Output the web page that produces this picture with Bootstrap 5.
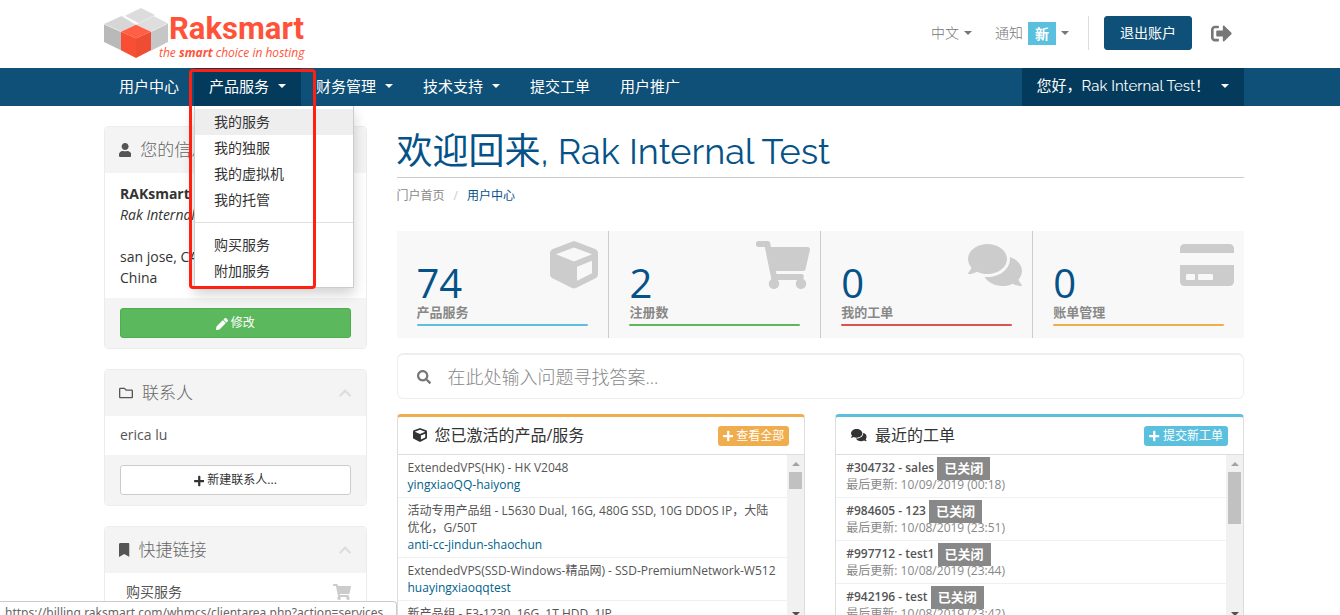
<!DOCTYPE html>
<html lang="zh-CN">
<head>
<meta charset="utf-8">
<meta name="viewport" content="width=device-width, initial-scale=1">
<title>用户中心 - Raksmart</title>
<link href="https://cdn.jsdelivr.net/npm/bootstrap@5.3.0/dist/css/bootstrap.min.css" rel="stylesheet">
<style>
  body { font-family: "Open Sans", "Noto Sans CJK SC", sans-serif; font-size: 14px; line-height: 20px; color: #333; height: 100vh; overflow: hidden; }
  a { text-decoration: none; }
  .site-wrap { max-width: 1148px; padding: 0 0 0 8px; }
  .ico { height: 1em; width: auto; fill: currentColor; flex: none; }
  .caret { display: inline-block; border: 4px solid transparent; border-top-color: currentColor; border-bottom: 0; flex: none; }

  .top-bar { height: 66px; margin-bottom: 2px; }
  .brand-text { margin-left: -9px; padding-top: 5px; }
  .brand-name { color: #ff5339; font: bold 31px/34px Roboto, "Liberation Sans", sans-serif; padding-left: 10px; }
  .brand-tag { color: #ff5339; font-size: 12px; font-style: italic; line-height: 14px; }
  .top-tools { padding-right: 12px; gap: 19px; }
  .top-link { color: #777; gap: 5px; font-weight: 300; }
  .new-tag { background: #5bc0de; color: #fff; font-weight: 700; padding: 0 7px; line-height: 23px; }
  .top-sep { width: 1px; height: 34px; background: #ddd; }
  .btn-logout { --bs-btn-color: #fff; --bs-btn-bg: #0f5078; --bs-btn-border-color: #0f5078; --bs-btn-hover-color: #fff; --bs-btn-hover-bg: #043b5c; font-size: 14px; line-height: 20px; padding: 6px 15px; border-radius: 3px; margin-left: -4px; }
  .exit-ico { font-size: 21px; color: #777; }

  .main-menu { background: #0f5078; }
  .main-menu a.menu-link { color: #fff; font-size: 15px; line-height: 20px; padding: 8px 15px 10px; display: flex; align-items: center; gap: 9px; }
  .main-menu a.current { background: #043b5c; }
  .main-menu a.account { font-family: Raleway, "Noto Sans CJK SC", sans-serif; gap: 11px; }
  .sub-menu { display: block; top: 100%; left: 0; width: 160px; min-width: 0; padding: 3px 0; font-size: 14px; border: 1px solid #ccc; border-top: 0; border-radius: 0; box-shadow: 0 6px 12px rgba(0,0,0,.18); }
  .sub-menu .dropdown-item { padding: 3px 19px; line-height: 20px; color: #333; }
  .sub-menu .dropdown-item.hovered { background: #eee; }
  .sub-menu .dropdown-divider { margin: 9px 0; border-color: #e0e0e0; opacity: 1; }
  .red-frame { position: absolute; z-index: 1100; top: 1px; left: -5px; width: 127px; height: 220px; border: 3px solid #ff2012; border-radius: 4px; pointer-events: none; }

  .page-row { --bs-gutter-x: 30px; }
  .side-box { border: 1px solid #ececec; border-radius: 4px; margin-bottom: 20px; overflow: hidden; }
  .side-head { background: #f4f4f4; font-size: 17px; line-height: 26px; padding: 10px 14px; color: #666; font-weight: 300; gap: 9px; }
  .side-head .ico { font-size: 14px; color: #555; }
  .side-head .chev { color: #ddd; margin-left: auto; }
  .side-foot { background: #f4f4f4; padding: 10px 15px; }
  .side-foot .btn { font-size: 12px; line-height: 18px; padding: 5px 10px; border-radius: 3px; }
  .btn-edit { background: #5cb85c; border-color: #4cae4c; color: #fff; }
  .btn-add { background: #fff; border-color: #ccc; color: #333; }
  .side-info { padding: 10px 15px; line-height: 21px; }
  .side-item { padding: 9px 15px 10px; color: #555; }
  .quick { padding-left: 21px; }
  .quick .ico { font-size: 16px; color: #ccc; }

  .welcome { font: 400 36px/52px Raleway, "Noto Sans CJK SC", sans-serif; color: #045288; border-bottom: 1px solid #ccc; margin: 0; padding-top: 3px; }
  .crumbs { --bs-breadcrumb-divider-color: #ccc; --bs-breadcrumb-item-padding-x: 9px; font-size: 12px; line-height: 18px; padding: 9px 0; margin: 0 0 17px; }
  .crumbs a { color: #888; }
  .crumbs .active { color: #045288; }
  .tile { background: #f8f8f8; height: 107px; padding: 31px 20px 0; color: #888; position: relative; display: block; }
  .tile-cell + .tile-cell .tile { border-left: 1px solid #ccc; }
  .tile .ico { position: absolute; top: 10px; right: 10px; font-size: 48px; color: #ccc; }
  .tile-num { font-size: 40px; line-height: 42px; color: #045288; }
  .tile-name { font-size: 13px; line-height: 17px; font-weight: 700; }
  .tile-bar { height: 2px; margin-top: 3px; border-radius: 1px; }
  .c-teal { background: #5bc0de; } .c-green { background: #5cb85c; } .c-red { background: #d9534f; } .c-gold { background: #f0ad4e; }

  .ask { border: 1px solid #eee; border-top-width: 2px; border-radius: 6px; margin: 15px 0; padding: 0 19px; gap: 17px; color: #777; }
  .ask .ico { font-size: 14px; }
  .ask input { border: 0; padding: 7px 0 6px; font-size: 18px; line-height: 30px; font-weight: 300; background: none; box-shadow: none !important; }
  .ask input::placeholder { color: #888; }

  .feed { border: 1px solid #ddd; border-top: 3px solid; border-radius: 4px; }
  .feed-gold { border-top-color: #f0ad4e; } .feed-teal { border-top-color: #5bc0de; }
  .feed-head { border-bottom: 1px solid #ddd; padding: 6px 15px 7px; font-size: 16px; line-height: 24px; gap: 8px; }
  .feed-head .head-ico { font-size: 14px; }
  .feed-head .btn { margin: 2px 0 0 auto; color: #fff; font-size: 12px; line-height: 18px; padding: 1px 5px; border: 0; border-radius: 3px; gap: 3px; }
  .feed-body { height: 163px; overflow: hidden; }
  .feed-list { font-size: 12px; line-height: 17px; color: #555; min-width: 0; }
  .feed-list > a { display: block; padding: 4px 10px; border-bottom: 1px solid #f0f0f0; color: #555; }
  .feed-list .host { color: #005f8b; }
  .feed-list .when { color: #888; }
  .feed-list .subject { font-weight: 600; }
  .closed { position: relative; z-index: 1; display: inline-block; background: #888; color: #fff; font-size: 13px; font-weight: 700; line-height: 23px; padding: 0 7px; margin: -2px 0 -4px; vertical-align: top; }
  .scroll-rail { width: 17px; background: #f1f1f1; flex: none; padding: 7px 0 2px; color: #505050; }
  .rail-up { border: 4px solid transparent; border-top: 0; border-bottom-color: #a3a3a3; }
  .rail-thumb { width: 13px; height: 17px; background: #c1c1c1; margin: 6px 0 auto; }
  .rail-thumb.tall { height: 52px; }

  .status-line { height: 14px; overflow: hidden; background: #fff; border: 1px solid #ccc; border-bottom: 0; border-left: 0; border-top-right-radius: 4px; padding: 0 13px 0 5px; font: 12px/22px "Noto Sans", sans-serif; color: #666; z-index: 1200; }
</style>
</head>
<body>
<svg class="d-none" xmlns="http://www.w3.org/2000/svg">
  <symbol id="i-exit" viewBox="0 0 512 512"><path d="M497 273L329 441c-15 15-41 4.500-41-17v-96H152c-13.300 0-24-10.700-24-24v-96c0-13.300 10.700-24 24-24h136V88c0-21.400 25.900-32 41-17l168 168c9.300 9.400 9.300 24.600 0 34zM192 436v-40c0-6.600-5.400-12-12-12H96c-17.700 0-32-14.300-32-32V160c0-17.700 14.300-32 32-32h84c6.600 0 12-5.400 12-12V76c0-6.600-5.400-12-12-12H96c-53 0-96 43-96 96v192c0 53 43 96 96 96h84c6.600 0 12-5.400 12-12z"/></symbol>
  <symbol id="i-cube" viewBox="0 0 512 512"><path d="M239.100 6.300l-208 78c-18.700 7-31.100 25-31.100 45v225.100c0 18.200 10.300 34.800 26.500 42.900l208 104c13.500 6.800 29.400 6.800 42.900 0l208-104c16.300-8.100 26.500-24.800 26.500-42.900V129.300c0-20-12.400-37.900-31.100-44.900l-208-78C262 2.200 250 2.200 239.100 6.300zM256 68.400l192 72v1.100l-192 78-192-78v-1.100l192-72zm32 356V275.500l160-65v133.900l-160 80z"/></symbol>
  <symbol id="i-cart" viewBox="0 0 576 512"><path d="M528.120 301.319l47.273-208C578.806 78.301 567.391 64 551.990 64H159.208l-9.166-44.810C147.758 8.021 137.930 0 126.529 0H24C10.745 0 0 10.745 0 24v16c0 13.255 10.745 24 24 24h69.883l70.248 343.435C147.325 417.100 136 435.222 136 456c0 30.928 25.072 56 56 56s56-25.072 56-56c0-15.674-6.447-29.835-16.824-40h209.647C430.447 426.165 424 440.326 424 456c0 30.928 25.072 56 56 56s56-25.072 56-56c0-22.172-12.888-41.332-31.579-50.405l5.517-24.276c3.413-15.018-8.002-29.319-23.403-29.319H218.117l-6.545-32h293.145c11.206 0 20.920-7.754 23.403-18.681z"/></symbol>
  <symbol id="i-talk" viewBox="0 0 576 512"><path d="M416 192c0-88.400-93.100-160-208-160S0 103.600 0 192c0 34.300 14.100 65.900 38 92-13.400 30.200-35.500 54.200-35.800 54.500-2.200 2.300-2.800 5.700-1.500 8.700S4.800 352 8 352c36.600 0 66.900-12.300 88.700-25 32.200 15.700 70.300 25 111.300 25 114.900 0 208-71.600 208-160zm122 220c23.900-26 38-57.700 38-92 0-66.900-53.500-124.200-129.300-148.100.9 6.600 1.300 13.300 1.300 20.100 0 105.900-107.700 192-240 192-10.800 0-21.300-.8-31.700-1.900C207.800 439.600 281.800 480 368 480c41 0 79.100-9.200 111.300-25 21.800 12.700 52.100 25 88.700 25 3.200 0 6.100-1.900 7.300-4.800 1.300-2.900.7-6.300-1.500-8.700-.3-.3-22.400-24.200-35.800-54.500z"/></symbol>
  <symbol id="i-card" viewBox="0 0 576 512"><path d="M0 432c0 26.500 21.500 48 48 48h480c26.500 0 48-21.500 48-48V256H0v176zm192-68c0-6.600 5.400-12 12-12h136c6.600 0 12 5.400 12 12v40c0 6.600-5.400 12-12 12H204c-6.600 0-12-5.400-12-12v-40zm-128 0c0-6.600 5.400-12 12-12h72c6.600 0 12 5.400 12 12v40c0 6.600-5.400 12-12 12H76c-6.600 0-12-5.400-12-12v-40zM576 80v48H0V80c0-26.500 21.500-48 48-48h480c26.500 0 48 21.500 48 48z"/></symbol>
  <symbol id="i-user" viewBox="0 0 448 512"><path d="M224 256c70.700 0 128-57.300 128-128S294.700 0 224 0 96 57.300 96 128s57.300 128 128 128zm89.600 32h-16.700c-22.200 10.200-46.900 16-72.900 16s-50.600-5.800-72.900-16h-16.700C60.200 288 0 348.200 0 422.400V464c0 26.500 21.500 48 48 48h352c26.500 0 48-21.500 48-48v-41.600c0-74.200-60.200-134.400-134.400-134.400z"/></symbol>
  <symbol id="i-folder" viewBox="0 0 512 512"><path d="M464 128H272l-54.630-54.630c-6-6-14.140-9.370-22.630-9.370H48C21.490 64 0 85.490 0 112v288c0 26.510 21.490 48 48 48h416c26.510 0 48-21.490 48-48V176c0-26.510-21.490-48-48-48zm0 272H48V112h140.120l54.630 54.630c6 6 14.140 9.370 22.630 9.370H464v224z"/></symbol>
  <symbol id="i-mark" viewBox="0 0 384 512"><path d="M0 512V48C0 21.490 21.490 0 48 0h288c26.510 0 48 21.490 48 48v464L192 400 0 512z"/></symbol>
  <symbol id="i-up" viewBox="0 0 448 512"><path d="M240.971 130.524l194.343 194.343c9.373 9.373 9.373 24.569 0 33.941l-22.667 22.667c-9.357 9.357-24.522 9.375-33.901.04L224 227.495 69.255 381.516c-9.379 9.335-24.544 9.317-33.901-.04l-22.667-22.667c-9.373-9.373-9.373-24.569 0-33.941L207.030 130.525c9.372-9.373 24.568-9.373 33.941-.001z"/></symbol>
  <symbol id="i-pen" viewBox="0 0 512 512"><path d="M497.900 142.100l-46.100 46.100c-4.700 4.700-12.300 4.700-17 0l-111-111c-4.700-4.700-4.700-12.300 0-17l46.100-46.100c18.700-18.700 49.100-18.700 67.900 0l60.100 60.100c18.800 18.700 18.800 49.100 0 67.900zM284.200 99.800L21.600 362.400.4 483.900c-2.900 16.400 11.400 30.600 27.800 27.800l121.500-21.300 262.600-262.600c4.700-4.700 4.700-12.300 0-17l-111-111c-4.800-4.700-12.400-4.700-17.100 0z"/></symbol>
  <symbol id="i-plus" viewBox="0 0 448 512"><path d="M416 208H272V64c0-17.670-14.330-32-32-32h-32c-17.670 0-32 14.330-32 32v144H32c-17.670 0-32 14.330-32 32v32c0 17.670 14.330 32 32 32h144v144c0 17.670 14.330 32 32 32h32c17.670 0 32-14.330 32-32V304h144c17.670 0 32-14.330 32-32v-32c0-17.670-14.330-32-32-32z"/></symbol>
  <symbol id="i-find" viewBox="0 0 512 512"><path d="M505 442.700L405.300 343c-4.500-4.500-10.600-7-17-7H372c27.600-35.300 44-79.700 44-128C416 93.100 322.900 0 208 0S0 93.100 0 208s93.100 208 208 208c48.300 0 92.700-16.400 128-44v16.300c0 6.400 2.500 12.500 7 17l99.700 99.700c9.400 9.400 24.600 9.400 33.900 0l28.300-28.300c9.400-9.400 9.400-24.600.1-34zM208 336c-70.700 0-128-57.200-128-128 0-70.700 57.200-128 128-128 70.700 0 128 57.200 128 128 0 70.700-57.200 128-128 128z"/></symbol>
</svg>

<header>
  <div class="container site-wrap top-bar d-flex align-items-center justify-content-between">
    <a href="#" class="d-flex align-items-center" aria-label="Raksmart">
      <svg width="64" height="50" viewBox="42 24 192 150" aria-hidden="true">
        <path fill="#dcdcdc" d="M153 24l42 21-45 27-45-25z"/>
        <path fill="#d6d6d6" d="M42 72l53-24 43 26-45 21z"/>
        <path fill="#b9b9b9" d="M42 72l51 23v56l-51-25z"/>
        <path fill="#dedede" d="M190 48l44 22-51 25-45-21z"/>
        <path fill="#c6c6c6" d="M183 95l51-25v56l-51 26z"/>
        <path fill="none" stroke="#f2f2f2" stroke-width="2" d="M95 48l43 26 52-26M42 72l51 23M234 70l-51 25"/>
        <path fill="#ff5f44" d="M138 74l45 21-45 20-45-20z"/>
        <path fill="#f84e34" d="M93 95l45 20v59l-45-23z"/>
        <path fill="#ee4d33" d="M138 115l45-20v56l-45 23z"/>
      </svg>
      <span class="brand-text d-flex flex-column"><span class="brand-name">Raksmart</span><span class="brand-tag">the <b>smart</b> choice in hosting</span></span>
    </a>
    <div class="top-tools d-flex align-items-center">
      <a href="#" class="top-link d-flex align-items-center me-1">中文<span class="caret"></span></a>
      <a href="#" class="top-link d-flex align-items-center">通知<span class="new-tag">新</span><span class="caret"></span></a>
      <span class="top-sep"></span>
      <button type="button" class="btn btn-logout">退出账户</button>
      <a href="#" class="exit-ico d-flex" aria-label="退出"><svg class="ico" viewBox="0 0 512 512"><use href="#i-exit"/></svg></a>
    </div>
  </div>
  <nav class="main-menu">
    <div class="container site-wrap d-flex">
      <a href="#" class="menu-link">用户中心</a>
      <div class="position-relative">
        <a href="#" class="menu-link current">产品服务<span class="caret"></span></a>
        <div class="dropdown-menu sub-menu">
          <a class="dropdown-item hovered" href="#">我的服务</a>
          <a class="dropdown-item" href="#">我的独服</a>
          <a class="dropdown-item" href="#">我的虚拟机</a>
          <a class="dropdown-item" href="#">我的托管</a>
          <hr class="dropdown-divider">
          <a class="dropdown-item" href="#">购买服务</a>
          <a class="dropdown-item" href="#">附加服务</a>
        </div>
        <div class="red-frame"></div>
      </div>
      <a href="#" class="menu-link">财务管理<span class="caret"></span></a>
      <a href="#" class="menu-link">技术支持<span class="caret"></span></a>
      <a href="#" class="menu-link">提交工单</a>
      <a href="#" class="menu-link">用户推广</a>
      <a href="#" class="menu-link current account ms-auto">您好，Rak Internal Test！<span class="caret"></span></a>
    </div>
  </nav>
</header>

<main class="container site-wrap">
  <div class="row page-row">
    <aside class="col-3 pt-3">
      <section class="side-box mt-1">
        <div class="side-head d-flex align-items-center"><svg class="ico" viewBox="0 0 448 512"><use href="#i-user"/></svg>您的信息</div>
        <div class="side-info"><b>RAKsmart</b><br><em>Rak Internal Test</em><br><br>san jose, CA<br>China</div>
        <div class="side-foot"><button type="button" class="btn btn-edit w-100"><svg class="ico" viewBox="0 0 512 512"><use href="#i-pen"/></svg> 修改</button></div>
      </section>
      <section class="side-box">
        <div class="side-head d-flex align-items-center"><svg class="ico" viewBox="0 0 512 512"><use href="#i-folder"/></svg>联系人<svg class="ico chev" viewBox="0 0 448 512"><use href="#i-up"/></svg></div>
        <a href="#" class="side-item d-block">erica lu</a>
        <div class="side-foot"><button type="button" class="btn btn-add w-100"><svg class="ico" viewBox="0 0 448 512"><use href="#i-plus"/></svg> 新建联系人...</button></div>
      </section>
      <section class="side-box">
        <div class="side-head d-flex align-items-center"><svg class="ico" viewBox="0 0 384 512"><use href="#i-mark"/></svg>快捷链接<svg class="ico chev" viewBox="0 0 448 512"><use href="#i-up"/></svg></div>
        <a href="#" class="side-item quick d-flex align-items-center justify-content-between">购买服务<svg class="ico" viewBox="0 0 576 512"><use href="#i-cart"/></svg></a>
      </section>
    </aside>

    <div class="col-9 pt-3">
      <h1 class="welcome">欢迎回来, Rak Internal Test</h1>
      <ol class="breadcrumb crumbs"><li class="breadcrumb-item"><a href="#">门户首页</a></li><li class="breadcrumb-item active">用户中心</li></ol>
      <div class="row g-0">
        <div class="col-3 tile-cell"><a href="#" class="tile"><svg class="ico" viewBox="0 0 512 512"><use href="#i-cube"/></svg><div class="tile-num">74</div><div class="tile-name">产品服务</div><div class="tile-bar c-teal"></div></a></div>
        <div class="col-3 tile-cell"><a href="#" class="tile"><svg class="ico" viewBox="0 0 576 512"><use href="#i-cart"/></svg><div class="tile-num">2</div><div class="tile-name">注册数</div><div class="tile-bar c-green"></div></a></div>
        <div class="col-3 tile-cell"><a href="#" class="tile"><svg class="ico" viewBox="0 0 576 512"><use href="#i-talk"/></svg><div class="tile-num">0</div><div class="tile-name">我的工单</div><div class="tile-bar c-red"></div></a></div>
        <div class="col-3 tile-cell"><a href="#" class="tile"><svg class="ico" viewBox="0 0 576 512"><use href="#i-card"/></svg><div class="tile-num">0</div><div class="tile-name">账单管理</div><div class="tile-bar c-gold"></div></a></div>
      </div>
      <label class="ask d-flex align-items-center"><svg class="ico" viewBox="0 0 512 512"><use href="#i-find"/></svg><input type="text" class="form-control" aria-label="搜索" placeholder="在此处输入问题寻找答案..."></label>
      <div class="row page-row">
        <div class="col-6">
          <section class="feed feed-gold">
            <div class="feed-head d-flex align-items-center"><svg class="ico head-ico" viewBox="0 0 512 512"><use href="#i-cube"/></svg>您已激活的产品/服务<button type="button" class="btn c-gold d-flex align-items-center"><svg class="ico" viewBox="0 0 448 512"><use href="#i-plus"/></svg>查看全部</button></div>
            <div class="feed-body d-flex">
              <div class="feed-list flex-grow-1">
                <a href="#">ExtendedVPS(HK) - HK V2048<br><span class="host">yingxiaoQQ-haiyong</span></a>
                <a href="#">活动专用产品组 - L5630 Dual, 16G, 480G SSD, 10G DDOS IP，大陆优化，G/50T<br><span class="host">anti-cc-jindun-shaochun</span></a>
                <a href="#">ExtendedVPS(SSD-Windows-精品网) - SSD-PremiumNetwork-W512<br><span class="host">huayingxiaoqqtest</span></a>
                <a href="#">新产品组 - E3-1230, 16G, 1T HDD, 1IP</a>
              </div>
              <div class="scroll-rail d-flex flex-column align-items-center"><span class="rail-up"></span><span class="rail-thumb"></span><span class="caret"></span></div>
            </div>
          </section>
        </div>
        <div class="col-6">
          <section class="feed feed-teal">
            <div class="feed-head d-flex align-items-center"><svg class="ico head-ico" viewBox="0 0 576 512"><use href="#i-talk"/></svg>最近的工单<button type="button" class="btn c-teal d-flex align-items-center"><svg class="ico" viewBox="0 0 448 512"><use href="#i-plus"/></svg>提交新工单</button></div>
            <div class="feed-body d-flex">
              <div class="feed-list flex-grow-1">
                <a href="#"><span class="subject">#304732 - sales</span> <span class="closed">已关闭</span><br><span class="when">最后更新: 10/09/2019 (00:18)</span></a>
                <a href="#"><span class="subject">#984605 - 123</span> <span class="closed">已关闭</span><br><span class="when">最后更新: 10/08/2019 (23:51)</span></a>
                <a href="#"><span class="subject">#997712 - test1</span> <span class="closed">已关闭</span><br><span class="when">最后更新: 10/08/2019 (23:44)</span></a>
                <a href="#"><span class="subject">#942196 - test</span> <span class="closed">已关闭</span><br><span class="when">最后更新: 10/08/2019 (23:42)</span></a>
              </div>
              <div class="scroll-rail d-flex flex-column align-items-center"><span class="rail-up"></span><span class="rail-thumb tall"></span><span class="caret"></span></div>
            </div>
          </section>
        </div>
      </div>
    </div>
  </div>
</main>
<div class="status-line position-fixed bottom-0 start-0">https://billing.raksmart.com/whmcs/clientarea.php?action=services</div>
<script src="https://cdn.jsdelivr.net/npm/bootstrap@5.3.0/dist/js/bootstrap.bundle.min.js"></script>
</body>
</html>
